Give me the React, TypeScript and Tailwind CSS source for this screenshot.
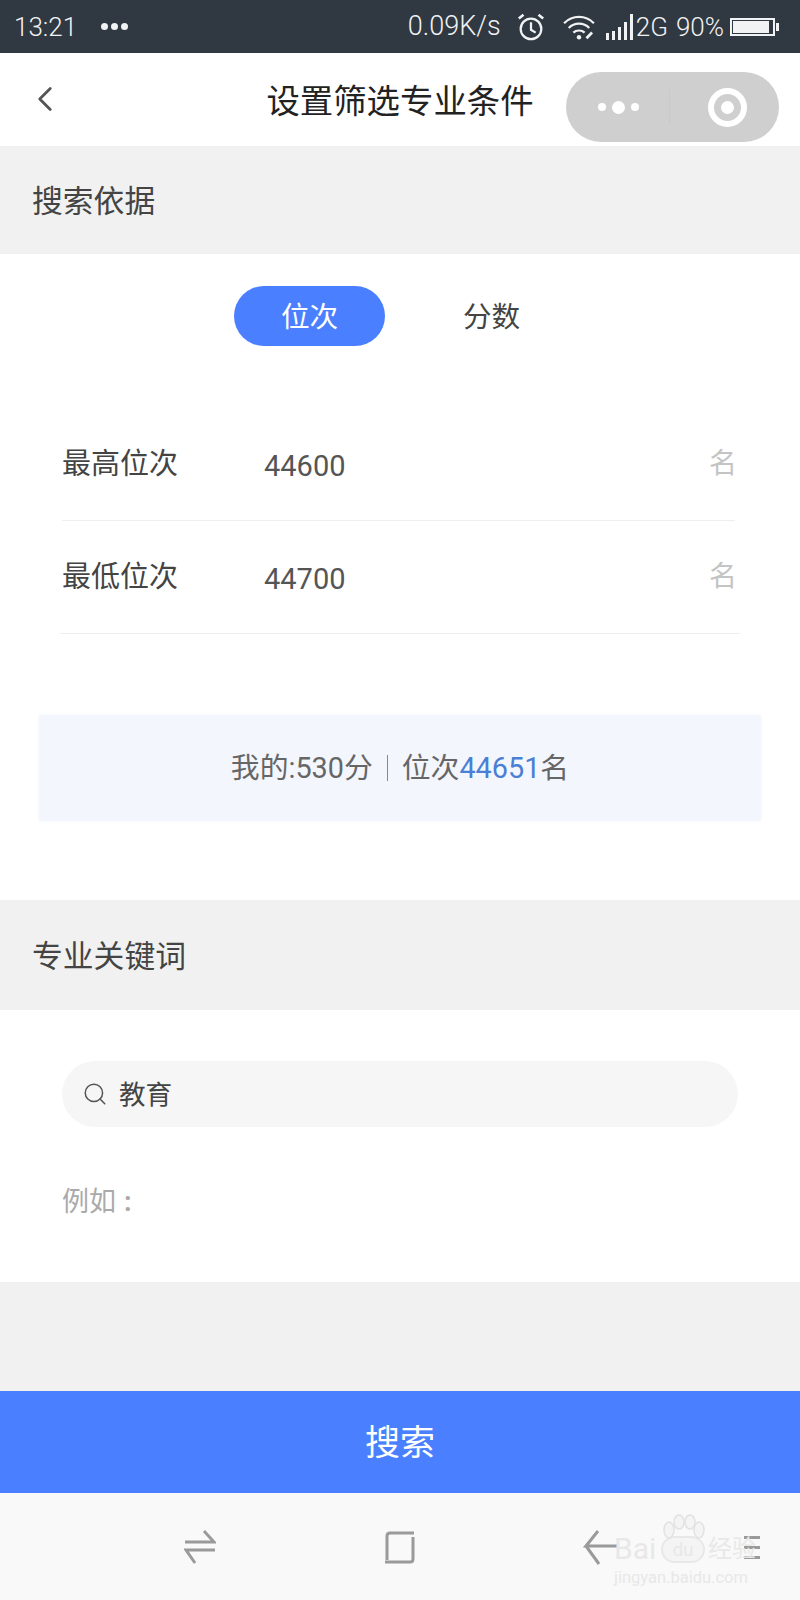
import { ChevronLeft, Search } from "lucide-react";

const fontStack = { fontFamily: 'Roboto, "Noto Sans CJK SC", sans-serif' };

const StatusBar = () => (
    <div className="h-[53px] bg-[#303841] flex items-center text-[#f0f2f3] pl-[14px] pr-[21px]">
        <span className="text-[26px] leading-none font-light w-[87px]">13:21</span>
        <div className="flex gap-[3px]">
            <span className="w-[7px] h-[7px] rounded-full bg-[#f0f2f3]" />
            <span className="w-[7px] h-[7px] rounded-full bg-[#f0f2f3]" />
            <span className="w-[7px] h-[7px] rounded-full bg-[#f0f2f3]" />
        </div>
        <span className="ml-auto text-[27px] leading-none font-light">0.09K/s</span>
        <svg className="ml-[15px]" width="30" height="32" viewBox="0 0 32 32" fill="none" stroke="#f0f2f3" strokeWidth="2.4">
            <circle cx="16" cy="18" r="11" />
            <path d="M16 11v8l5 3" />
            <path d="M3 7l5-4M29 7l-5-4" strokeWidth="2.8" />
        </svg>
        <svg className="ml-[16px]" width="34" height="28" viewBox="0 0 36 30" fill="none" stroke="#f0f2f3" strokeWidth="2.4">
            <path d="M2 11c9-9 23-9 32 0" />
            <path d="M7 16c6-6 16-6 22 0" />
            <path d="M12 21c3-3 9-3 12 0" />
            <circle cx="18" cy="26" r="2.4" fill="#f0f2f3" stroke="none" />
            <path d="M26 27l6-6" strokeWidth="3" />
        </svg>
        <div className="ml-[10px] flex items-end gap-[3px] h-[26px]">
            <span className="w-[3px] h-[7px] bg-[#f0f2f3]" />
            <span className="w-[3px] h-[9px] bg-[#f0f2f3]" />
            <span className="w-[3px] h-[13px] bg-[#f0f2f3]" />
            <span className="w-[3px] h-[18px] bg-[#f0f2f3]" />
            <span className="w-[3px] h-[26px] bg-[#f0f2f3]" />
        </div>
        <span className="ml-[3px] text-[26px] leading-none font-light">2G</span>
        <span className="ml-[8px] text-[26px] leading-none font-light">90%</span>
        <div className="ml-[6px] flex items-center">
            <div className="w-[45px] h-[18px] border-2 border-[#f0f2f3] p-[1px]">
                <div className="w-[36px] h-full bg-[#f0f2f3]" />
            </div>
            <span className="w-[3px] h-[8px] bg-[#f0f2f3] ml-[1px]" />
        </div>
    </div>
);

const Header = () => (
    <div className="relative h-[93px] bg-white flex items-center justify-center">
        <ChevronLeft className="absolute left-[24px] top-[25px] text-[#555]" size={42} strokeWidth={1.6} />
        <span className="text-[33.4px] leading-none text-[#222] mt-[4px]">设置筛选专业条件</span>
        <div className="absolute left-[566px] top-[19px] w-[213px] h-[70px] rounded-full bg-[#cfcfcf] flex items-center pl-[32px]">
            <span className="w-[8px] h-[8px] rounded-full bg-white" />
            <span className="w-[13px] h-[13px] rounded-full bg-white ml-[6px]" />
            <span className="w-[8px] h-[8px] rounded-full bg-white ml-[6px]" />
            <span className="ml-[30px] w-[1px] h-[34px] bg-[#c9c9c9]" />
            <div className="ml-auto mr-[32px] w-[39px] h-[39px] rounded-full border-[6px] border-white flex items-center justify-center">
                <span className="w-[13px] h-[13px] rounded-full bg-white" />
            </div>
        </div>
    </div>
);

const SectionTitle = ({ title }: { title: string }) => (
    <div className="w-full bg-[#f1f1f1] flex items-center pl-[32px] pt-[5px] text-[30.8px] leading-none text-[#444]">
        {title}
    </div>
);

const NavBar = () => (
    <div className="relative h-[107px] bg-[#f9f9f9] flex items-center">
        <svg className="absolute left-[184px] top-[36px]" width="32" height="36" viewBox="0 0 32 36" fill="none" stroke="#9a9a9a" strokeWidth="3">
            <path d="M1 13h29L20 2" />
            <path d="M31 21H2l9 13" />
        </svg>
        <svg className="absolute left-[384px] top-[38px]" width="32" height="33" viewBox="0 0 32 33" fill="none" stroke="#9a9a9a" strokeWidth="3">
            <path d="M3 29V5q0-3 3-3h24M1 31h25q3 0 3-3V6" />
        </svg>
        <svg className="absolute left-[583px] top-[36px]" width="34" height="36" viewBox="0 0 34 36" fill="none" stroke="#9a9a9a" strokeWidth="3">
            <path d="M15 2L3 17h31M3 17l13 18" />
        </svg>
        <div className="absolute left-[744px] top-[43px] flex flex-col gap-[7px]">
            <span className="w-[16px] h-[3px] bg-[#9a9a9a]" />
            <span className="w-[16px] h-[3px] bg-[#9a9a9a]" />
            <span className="w-[16px] h-[3px] bg-[#9a9a9a]" />
        </div>
        {/* baidu watermark */}
        <div className="absolute left-[614px] top-[41px] w-[144px] text-[#e8e8e8] flex flex-col">
            <svg className="absolute left-[48px] -top-[20px]" width="44" height="26" viewBox="0 0 44 26" fill="#f4f4f4" stroke="#e2e2e2" strokeWidth="1.5">
                <ellipse cx="7" cy="16" rx="5" ry="8" />
                <ellipse cx="17" cy="8" rx="5" ry="7" />
                <ellipse cx="28" cy="8" rx="5" ry="7" />
                <ellipse cx="37" cy="16" rx="5" ry="8" />
            </svg>
            <div className="flex items-center leading-none whitespace-nowrap">
                <span className="text-[30px] w-[47px]">Bai</span>
                <span className="w-[44px] h-[27px] rounded-full border-2 border-[#e8e8e8] bg-[#f4f4f4] flex items-center justify-center text-[19px]">du</span>
                <span className="text-[24px] ml-[3px]">经验</span>
            </div>
            <span className="text-[16.5px] leading-none mt-[6px] whitespace-nowrap">jingyan.baidu.com</span>
        </div>
    </div>
);

const App = () => {
    return (
        <div className="w-[800px] h-[1600px] flex flex-col bg-[#f1f1f1] overflow-hidden" style={fontStack}>
            <StatusBar />
            <Header />
            <div className="h-[108px] flex"><SectionTitle title="搜索依据" /></div>

            <div className="h-[646px] bg-white flex flex-col">
                <div className="flex items-center mt-[32px] pl-[234px]">
                    <span className="w-[151px] h-[60px] pt-[3px] rounded-full bg-[#4a7fff] text-white text-[28.6px] flex items-center justify-center">位次</span>
                    <span className="ml-[31px] w-[151px] pt-[3px] text-center text-[28.6px] leading-none text-[#444]">分数</span>
                </div>
                <div className="mt-[62px]">
                    <div className="h-[113px] flex items-center ml-[62px] mr-[65px] border-b border-[#eeeeee]">
                        <span className="text-[29px] leading-none text-[#444] w-[202px]">最高位次</span>
                        <span className="text-[29px] leading-none text-[#555] mt-[4px]">44600</span>
                        <span className="ml-auto text-[28px] leading-none text-[#c4c4c4] -mr-[2px]">名</span>
                    </div>
                    <div className="h-[113px] flex items-center mx-[60px] px-[2px] border-b border-[#eeeeee]">
                        <span className="text-[29px] leading-none text-[#444] w-[202px]">最低位次</span>
                        <span className="text-[29px] leading-none text-[#555] mt-[4px]">44700</span>
                        <span className="ml-auto text-[28px] leading-none text-[#c4c4c4] mr-[1px]">名</span>
                    </div>
                </div>
                <div className="mt-[81px] mx-[39px] h-[106px] bg-[#f3f6fd] shadow-[0_0_4px_#f3f6fd] flex items-center justify-center text-[28.8px] leading-none text-[#666]">
                    <span>我的:530分</span>
                    <span className="w-[1px] h-[26px] bg-[#888] mx-[14px]" />
                    <span>位次</span>
                    <span className="text-[#4a7fd6]">44651</span>
                    <span>名</span>
                </div>
            </div>

            <div className="h-[110px] flex"><SectionTitle title="专业关键词" /></div>

            <div className="h-[272px] bg-white flex flex-col">
                <div className="mt-[51px] mx-[62px] h-[66px] rounded-full bg-[#f6f6f6] flex items-center pl-[20px]">
                    <Search className="text-[#555]" size={26} strokeWidth={1.4} />
                    <span className="ml-[11px] mt-[2px] text-[26.6px] leading-none text-[#444]">教育</span>
                </div>
                <span className="mt-[62px] ml-[62px] text-[27px] leading-none text-[#aaaaaa]">例如<span className="ml-[8px] font-bold">:</span></span>
            </div>

            <div className="h-[109px]" />
            <div className="h-[102px] bg-[#4a7fff] flex items-center justify-center pt-[3px] text-white text-[35px] leading-none">搜索</div>
            <NavBar />
        </div>
    );
};

export default App;
